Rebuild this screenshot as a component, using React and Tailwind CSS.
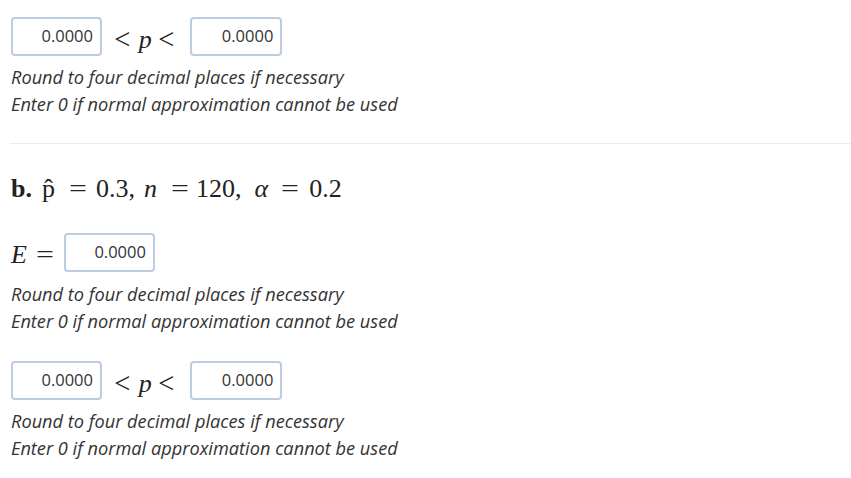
const Box = ({ value = '0.0000', w = 'w-[91px]' }) => (
  <div className={`${w} h-[39px] border-2 border-[#bccde3] rounded-[4px] flex items-center justify-end pr-[7px] text-[16.5px] text-[#333] font-['Open_Sans',sans-serif] bg-white shrink-0`}>
    {value}
  </div>
);

const Hint = () => (
  <div className="italic text-[18.2px] leading-[27px] text-[#333] font-['Open_Sans',sans-serif]">
    <div>Round to four decimal places if necessary</div>
    <div>Enter 0 if normal approximation cannot be used</div>
  </div>
);

// katex-ish wide equals sign
const Eq = ({ className = '' }) => (
  <span className={`inline-block w-[18px] text-center scale-x-[1.22] ${className}`}>=</span>
);

const Interval = () => (
  <div className="flex items-center">
    <Box />
    <span className="text-[26px] leading-none font-['Liberation_Serif',serif] text-[#222] flex items-baseline pt-[6px]">
      <span className="ml-[13px] inline-block scale-[1.1]">&lt;</span>
      <span className="italic ml-[9px]">p</span>
      <span className="ml-[7px] inline-block scale-[1.1]">&lt;</span>
    </span>
    <div className="ml-[17px]">
      <Box w="w-[92px]" />
    </div>
  </div>
);

export default function App() {
  return (
    <div className="bg-white w-[851px] h-[478px] overflow-hidden pt-[17px]">
      <div className="pl-[11px]">
        <Interval />
        <div className="mt-[8px]">
          <Hint />
        </div>
      </div>

      <div className="ml-[10px] mt-[25px] border-t border-[#ececec]" />

      <div className="pl-[11px] pt-[25px]">
        <div className="flex items-baseline text-[26px] text-[#222] font-['Liberation_Serif',serif] h-[32px] whitespace-pre">
          <span className="font-bold">b.</span>
          <span className="ml-[10px]">p̂</span>
          <Eq className="ml-[14px]" />
          <span className="ml-[9px]">0.3,</span>
          <span className="italic ml-[9px]">n</span>
          <Eq className="ml-[14px]" />
          <span className="ml-[7px]">120,</span>
          <span className="italic ml-[13px]">α</span>
          <Eq className="ml-[13px]" />
          <span className="ml-[10px]">0.2</span>
        </div>

        <div className="flex items-center mt-[32px]">
          <span className="text-[26px] leading-none font-['Liberation_Serif',serif] text-[#222] flex items-baseline pt-[4px]">
            <span className="italic">E</span>
            <Eq className="ml-[9px]" />
          </span>
          <div className="ml-[10px]">
            <Box />
          </div>
        </div>
        <div className="mt-[9px]">
          <Hint />
        </div>

        <div className="mt-[26px]">
          <Interval />
        </div>
        <div className="mt-[8px]">
          <Hint />
        </div>
      </div>
    </div>
  );
}
